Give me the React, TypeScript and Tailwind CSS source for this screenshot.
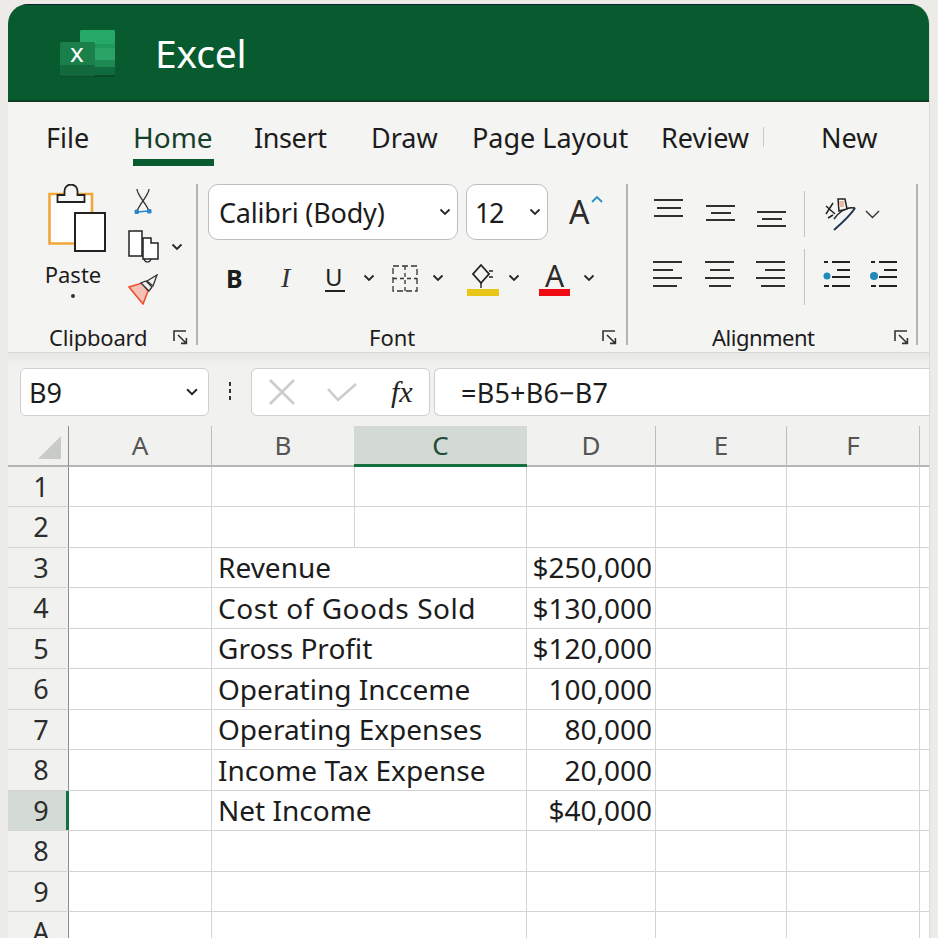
import React from "react";

const tabs = [
  { label: "File", className: "ml-[38px] w-[42px] text-[27px]" },
  { label: "Home", className: "ml-[45px] w-[81px] text-[28px] text-[#17402c]", active: true },
  { label: "Insert", className: "ml-[40px] w-[72px] text-[27px] tracking-[-0.4px]" },
  { label: "Draw", className: "ml-[45px] w-[67px] text-[27px]" },
  { label: "Page Layout", className: "ml-[34px] w-[156px] text-[27px]" },
  { label: "Review", className: "ml-[33px] w-[90px] text-[27px]" },
];

const rows = [
  { n: "1", split: true },
  { n: "2", split: true },
  { n: "3", label: "Revenue", value: "$250,000" },
  { n: "4", label: "Cost of Goods Sold", value: "$130,000", wide: true },
  { n: "5", label: "Gross Profit", value: "$120,000" },
  { n: "6", label: "Operating Incceme", value: "100,000" },
  { n: "7", label: "Operating Expenses", value: "80,000" },
  { n: "8", label: "Income Tax Expense", value: "20,000" },
  { n: "9", label: "Net Income", value: "$40,000", selected: true },
  { n: "8" },
  { n: "9" },
  { n: "A" },
];

const Chevron = ({ className = "" }: { className?: string }) => (
  <svg viewBox="0 0 12 8" className={`h-[8px] w-[12px] shrink-0 ${className}`} fill="none">
    <path d="M1.5 1.5 6 6l4.5-4.5" stroke="#262626" strokeWidth="1.8" />
  </svg>
);

const Launcher = ({ className = "" }: { className?: string }) => (
  <svg viewBox="0 0 15 15" className={`h-[15px] w-[15px] ${className}`} fill="none" stroke="#333" strokeWidth="1.6">
    <path d="M13 1H1v10" />
    <path d="M5 5l8 8M8 13.4h5.4V8" />
  </svg>
);

const ExcelLogo = () => (
  <svg viewBox="0 0 58 48" className="h-[48px] w-[58px]">
    <rect x="0" y="40" width="55" height="7" rx="2" fill="#0a4a29" />
    <rect x="20" y="0" width="35" height="44" rx="2" fill="#1f9a5c" />
    <rect x="20" y="0" width="35" height="14" rx="2" fill="#26a866" />
    <rect x="35" y="18" width="20" height="12" fill="#2ba367" />
    <rect x="35" y="30" width="20" height="11" fill="#1d8a53" />
    <rect x="20" y="37" width="35" height="8" rx="1" fill="#0f6b3d" />
    <rect x="0" y="12" width="35" height="33" rx="2" fill="#1a7f49" />
    <rect x="0" y="35" width="35" height="11" rx="2" fill="#11693c" />
    <text x="17" y="32" textAnchor="middle" fontSize="26" fill="#fff" fontFamily="Noto Sans, sans-serif">x</text>
  </svg>
);

const PasteIcon = () => (
  <svg viewBox="0 0 58 68" className="h-[68px] w-[58px]" fill="none">
    <rect x="1.500" y="10" width="42.500" height="49.500" fill="#fff" />
    <path d="M44 42V10H1.500v49.500H27" stroke="#f0a63a" strokeWidth="2.600" />
    <path d="M9.500 11v7h27v-7h-7V7a6 6 0 0 0-13 0v4z" stroke="#222" strokeWidth="1.800" fill="#f6f6f4" />
    <rect x="27" y="29" width="30" height="38" fill="#fff" stroke="#222" strokeWidth="2" />
  </svg>
);

const ScissorsIcon = () => (
  <svg viewBox="0 0 18 28" className="h-[28px] w-[18px]" fill="none">
    <path d="M3 1c0 6 9 14 12 22M15 1C15 7 6 15 3 23" stroke="#333" strokeWidth="1.300" />
    <path d="M4 24l10-1" stroke="#2a85cc" strokeWidth="1.500" />
    <rect x="0.500" y="21.500" width="4.500" height="4.500" rx="1.500" fill="#2a85cc" />
    <rect x="13" y="21" width="4.500" height="4.500" rx="1" fill="#2a85cc" />
  </svg>
);

const CopyIcon = () => (
  <svg viewBox="0 0 32 34" className="h-[34px] w-[32px]" fill="none" stroke="#222" strokeWidth="1.500">
    <path d="M15 8h8v5h7v16H15z" fill="#fff" />
    <path d="M1 1h13v25H1z" fill="#fff" />
    <path d="M16 29c1 4 6 4 7 0" strokeWidth="1.100" />
  </svg>
);

const BrushIcon = () => (
  <svg viewBox="0 0 31 31" className="h-[31px] w-[31px]" fill="none">
    <path d="M1 13l13-4 6 8-5 13z" fill="#f3c1b5" stroke="#ee4a2a" strokeWidth="1.500" />
    <path d="M13 9l8 8 3-4-6-6z" fill="#f2f2f0" stroke="#333" strokeWidth="1.300" />
    <path d="M19 7l10-6-4 11z" fill="#f2f2f0" stroke="#333" strokeWidth="1.300" />
  </svg>
);

const BordersIcon = () => (
  <svg viewBox="0 0 26 27" className="h-[27px] w-[26px]" fill="none" stroke="#333" strokeWidth="1.300">
    <path d="M1 1h24v25H1z" strokeDasharray="6 3" />
    <path d="M1 13.500h24M13 1v25" strokeDasharray="4 3" />
  </svg>
);

const FillIcon = () => (
  <div className="flex w-[32px] flex-col items-center">
    <svg viewBox="0 0 22 26" className="h-[26px] w-[22px]" fill="none" stroke="#222" strokeWidth="1.800">
      <path d="M9 2l8 9-8 9-8-9z" />
      <path d="M9 20v5M17 8l4 0M17 14h4" strokeWidth="1.400" />
    </svg>
    <div className="h-[7px] w-full bg-[#e8c619]" />
  </div>
);

const Lines = ({ widths, gap, className = "" }: { widths: string[]; gap: string; className?: string }) => (
  <div className={`flex w-[29px] flex-col ${gap} ${className}`}>
    {widths.map((w, i) => (
      <div key={i} className={`h-[2px] bg-[#303030] ${w}`} />
    ))}
  </div>
);

const OrientationIcon = () => (
  <svg viewBox="0 0 32 33" className="h-[33px] w-[32px]" fill="none">
    <path d="M10 32C18 25 26 18 31 10" stroke="#1d3557" strokeWidth="2" />
    <path d="M31 10c-5-1-9 0-13 3-3 2-6 5-8 8" stroke="#222" strokeWidth="1.500" />
    <path d="M14 1h7l2 10-8 2z" fill="#f6f6f4" stroke="#222" strokeWidth="1.500" />
    <rect x="15" y="3" width="5" height="6" fill="#e9b9a4" />
    <path d="M2 8l9 8M9 5 2 16M4 20l5-3" stroke="#222" strokeWidth="1.500" />
  </svg>
);

const IndentIcon = ({ r }: { r: string }) => (
  <svg viewBox="0 0 28 27" className="h-[27px] w-[28px]" fill="none" stroke="#222" strokeWidth="2">
    <path d="M1 2h4M9 2h18M14 10h13M9 17h18M1 26h5M9 26h18" />
    <circle cx="4" cy="16" r={r} fill="#2289bd" stroke="none" />
  </svg>
);

const GroupFooter = ({ label, className }: { label: string; className: string }) => (
  <div className="flex h-[30px] items-center">
    <span className={`text-[22px] leading-none text-[#1c1c1c] ${className}`}>{label}</span>
  </div>
);

const Separator = () => <div className="mt-[16px] h-[161px] w-[2px] shrink-0 bg-[#b4b4b2]" />;

const Ribbon = () => (
  <div className="flex h-[185px] shrink-0 border-b border-[#d9d9d7] bg-[#f4f4f2]">
    {/* clipboard */}
    <div className="flex w-[188px] shrink-0 flex-col">
      <div className="flex h-[155px] pt-[16px]">
        <div className="ml-[29px] flex w-[72px] flex-col items-center">
          <div className="ml-[8px]"><PasteIcon /></div>
          <span className="mt-[9px] text-[22px] leading-[26px] text-[#1c1c1c]">Paste</span>
          <div className="mt-[7px] h-[4px] w-[4px] rounded-full bg-[#333]" />
        </div>
        <div className="ml-[19px] flex flex-col">
          <div className="ml-[6px] mt-[4px]"><ScissorsIcon /></div>
          <div className="mt-[14px] flex items-center">
            <CopyIcon />
            <Chevron className="ml-[11px]" />
          </div>
          <div className="mt-[10px]"><BrushIcon /></div>
        </div>
      </div>
      <div className="flex items-center">
        <GroupFooter label="Clipboard" className="ml-[41px] tracking-[-0.2px]" />
        <Launcher className="ml-[26px]" />
      </div>
    </div>
    <Separator />
    {/* font */}
    <div className="flex w-[428px] shrink-0 flex-col">
      <div className="flex h-[155px] flex-col pt-[16px]">
        <div className="flex items-center">
          <div className="ml-[10px] flex h-[56px] w-[250px] items-center justify-between rounded-[10px] border border-[#bdbdbb] bg-white pl-[10px] pr-[6px]">
            <span className="text-[27px] leading-none tracking-[-0.2px] text-[#1c1c1c]">Calibri (Body)</span>
            <Chevron />
          </div>
          <div className="ml-[8px] flex h-[56px] w-[82px] items-center justify-between rounded-[10px] border border-[#bdbdbb] bg-white pl-[8px] pr-[6px]">
            <span className="text-[27px] leading-none tracking-[-1.5px] text-[#1c1c1c]">12</span>
            <Chevron />
          </div>
          <div className="relative ml-[21px] h-[30px] w-[34px]">
            <span className="text-[32px] leading-[30px] text-[#2b2b2b]">A</span>
            <svg viewBox="0 0 12 7" className="absolute right-0 top-[-1px] h-[7px] w-[12px]" fill="none">
              <path d="M1 6l5-5 5 5" stroke="#2a8fc4" strokeWidth="1.800" />
            </svg>
          </div>
        </div>
        <div className="mt-[17px] flex h-[42px] items-center">
          <span className="ml-[28px] w-[20px] text-[25px] font-bold leading-none text-[#1c1c1c]">B</span>
          <span className="ml-[35px] w-[16px] font-['Liberation_Serif',serif] text-[28px] italic leading-none text-[#333]">I</span>
          <span className="ml-[28px] w-[20px] border-b-2 border-[#222] text-[24px] leading-[26px] text-[#222]">U</span>
          <Chevron className="ml-[18px]" />
          <div className="ml-[17px]"><BordersIcon /></div>
          <Chevron className="ml-[14px]" />
          <div className="ml-[23px] mt-[2px]"><FillIcon /></div>
          <Chevron className="ml-[9px]" />
          <div className="ml-[19px] mt-[1px] flex w-[31px] flex-col items-center">
            <span className="text-[30px] leading-[27px] text-[#2b2b2b]">A</span>
            <div className="h-[7px] w-full bg-[#ee0b14]" />
          </div>
          <Chevron className="ml-[13px]" />
        </div>
      </div>
      <div className="flex items-center">
        <GroupFooter label="Font" className="ml-[171px]" />
        <Launcher className="ml-[187px]" />
      </div>
    </div>
    <Separator />
    {/* alignment */}
    <div className="flex w-[288px] shrink-0 flex-col">
      <div className="flex h-[155px] pt-[31px]">
        <div className="flex w-[176px] shrink-0 flex-col">
          <div className="flex h-[38px] items-start pl-[26px]">
            <Lines widths={["w-full", "w-[24px] self-center", "w-full"]} gap="gap-[6px]" />
            <Lines widths={["w-full", "w-[20px] self-center", "w-full"]} gap="gap-[5px]" className="ml-[23px] mt-[6px]" />
            <Lines widths={["w-full", "w-[20px] self-center", "w-full"]} gap="gap-[5px]" className="ml-[22px] mt-[12px]" />
          </div>
          <div className="mt-[24px] flex items-start pl-[25px]">
            <Lines widths={["w-full", "w-[20px]", "w-full", "w-[24px]"]} gap="gap-[6px]" />
            <Lines widths={["w-full", "w-[20px] self-center", "w-full", "w-[22px] self-center"]} gap="gap-[6px]" className="ml-[23px]" />
            <Lines widths={["w-full", "w-[20px] self-end", "w-full", "w-[24px] self-end"]} gap="gap-[6px]" className="ml-[22px]" />
          </div>
        </div>
        <div className="flex flex-col">
          <div className="mt-[-8px] flex h-[46px] items-center">
            <div className="h-[46px] w-[1px] bg-[#c4c4c2]" />
            <div className="ml-[19px]"><OrientationIcon /></div>
            <svg viewBox="0 0 15 9" className="ml-[9px] h-[9px] w-[15px]" fill="none">
              <path d="M1 1l6.500 6.500L14 1" stroke="#333" strokeWidth="1.400" />
            </svg>
          </div>
          <div className="mt-[12px] flex items-start">
            <div className="h-[56px] w-[1px] bg-[#c4c4c2]" />
            <div className="ml-[18px] mt-[11px]"><IndentIcon r="3.500" /></div>
            <div className="ml-[19px] mt-[11px]"><IndentIcon r="4" /></div>
          </div>
        </div>
      </div>
      <div className="flex items-center">
        <GroupFooter label="Alignment" className="ml-[84px] tracking-[-0.5px]" />
        <Launcher className="ml-[79px]" />
      </div>
    </div>
    <Separator />
  </div>
);

const FormulaBar = () => (
  <div className="flex h-[73px] shrink-0 items-start bg-gradient-to-b from-[#e6e6e4] to-[#f1f1ef] to-[12px] pt-[15px]">
    <div className="ml-[12px] flex h-[48px] w-[189px] items-center justify-between rounded-[6px] border border-[#cfcfcd] bg-white pl-[8px] pr-[10px]">
      <span className="text-[27px] leading-none text-[#1c1c1c]">B9</span>
      <Chevron className="scale-110" />
    </div>
    <div className="ml-[20px] mt-[14px] flex flex-col gap-[3px]">
      <div className="h-[4px] w-[2px] bg-[#333]" />
      <div className="h-[4px] w-[2px] bg-[#333]" />
      <div className="h-[4px] w-[2px] bg-[#333]" />
    </div>
    <div className="ml-[20px] flex h-[48px] w-[179px] items-center rounded-[6px] border border-[#cfcfcd] bg-white">
      <svg viewBox="0 0 28 28" className="ml-[16px] h-[28px] w-[28px]" fill="none">
        <path d="M2 2l24 24M26 2 2 26" stroke="#cccccc" strokeWidth="2.500" />
      </svg>
      <svg viewBox="0 0 30 20" className="ml-[31px] h-[20px] w-[30px]" fill="none">
        <path d="M1 7l10 11L29 2" stroke="#cccccc" strokeWidth="2.500" />
      </svg>
      <span className="ml-[34px] font-['Liberation_Serif',serif] text-[30px] italic leading-none text-[#222]">fx</span>
    </div>
    <div className="ml-[4px] flex h-[48px] flex-1 items-center rounded-l-[6px] border-y border-l border-[#cfcfcd] bg-white pl-[26px]">
      <span className="text-[27px] leading-none tracking-[0.2px] text-[#1c1c1c]">=B5+B6−B7</span>
    </div>
  </div>
);

const grid = "grid grid-cols-[61px_143px_143px_172px_129px_131px_133px_9px]";
const cell = "border-r border-b border-[#d4d4d2]";

const Sheet = () => (
  <div className="min-h-0 flex-1 overflow-hidden bg-white">
    <div className={`${grid} h-[40.500px] bg-[#f1f1ef]`}>
      <div className="flex items-end justify-end border-r border-b-2 border-r-[#8d8d8b] border-b-[#b5b5b3] pb-[6px] pr-[7px]">
        <div className="h-0 w-0 border-b-[23px] border-l-[23px] border-b-[#c8cbc8] border-l-transparent" />
      </div>
      {["A", "B"].map((c) => (
        <div key={c} className="flex items-center justify-center border-r border-b-2 border-r-[#bdbdbb] border-b-[#b5b5b3] text-[26px] leading-none text-[#555]">
          {c}
        </div>
      ))}
      <div className="ml-[-1px] flex items-center justify-center border-b-[3px] border-[#14713f] bg-[#d3d9d4] text-[26px] leading-none text-[#214a38]">C</div>
      {["D", "E", "F"].map((c) => (
        <div key={c} className="flex items-center justify-center border-r border-b-2 border-r-[#bdbdbb] border-b-[#b5b5b3] text-[26px] leading-none text-[#555]">
          {c}
        </div>
      ))}
      <div className="border-b-2 border-[#b5b5b3]" />
    </div>
    {rows.map((row, i) => (
      <div key={i} className={`${grid} h-[40.500px]`}>
        <div className={`flex items-center justify-center border-b border-r border-b-[#d4d4d2] border-r-[#8d8d8b] pl-[6px] text-[27px] leading-none text-[#2d2d2d] ${row.selected ? "relative bg-[#d4dad5]" : "bg-[#f1f1ef]"}`}>
          {row.n}
          {row.selected && <div className="absolute right-[-1px] top-0 h-full w-[3px] bg-[#14713f]" />}
        </div>
        <div className={cell} />
        {row.split ? (
          <>
            <div className={cell} />
            <div className={cell} />
          </>
        ) : (
          <div className={`${cell} col-span-2 flex items-center pl-[6px] text-[28px] leading-none text-[#1c1c1c] ${row.wide ? "tracking-[0.55px]" : ""}`}>
            {row.label}
          </div>
        )}
        <div className={`${cell} flex items-center justify-end pr-[3px] text-[28px] leading-none text-[#1c1c1c]`}>
          {row.value}
        </div>
        <div className={cell} />
        <div className={cell} />
        <div className="border-b border-[#d4d4d2]" />
      </div>
    ))}
  </div>
);

export default function App() {
  return (
    <div className="h-[938px] w-[938px] overflow-hidden bg-[#ecebe7] pl-[8px] pr-[8px] pt-[4px] font-['Noto_Sans','Open_Sans',sans-serif]">
      <div className="flex h-[934px] flex-col overflow-hidden rounded-t-[20px] border-r border-[#dcdcda]">
        <div className="flex h-[98px] shrink-0 items-center border-t border-b-2 border-t-[#123] border-b-[#0d3d22] bg-[#075b2e]">
          <div className="ml-[52px] mt-[3px]"><ExcelLogo /></div>
          <span className="ml-[37px] text-[39px] leading-none tracking-[-0.2px] text-white">Excel</span>
        </div>
        <div className="flex h-[66px] shrink-0 items-center bg-[#f4f4f2] pt-[4px]">
          {tabs.map((t) => (
            <div key={t.label} className={`relative whitespace-nowrap leading-none text-[#1c1c1c] ${t.className}`}>
              {t.label}
              {t.active && <div className="absolute inset-x-0 top-[36px] h-[7px] bg-[#075b2e]" />}
            </div>
          ))}
          <div className="ml-[12px] h-[20px] w-[1px] bg-[#c9c9c7]" />
          <span className="ml-[57px] text-[27px] leading-none text-[#1c1c1c]">New</span>
        </div>
        <Ribbon />
        <FormulaBar />
        <Sheet />
      </div>
    </div>
  );
}
